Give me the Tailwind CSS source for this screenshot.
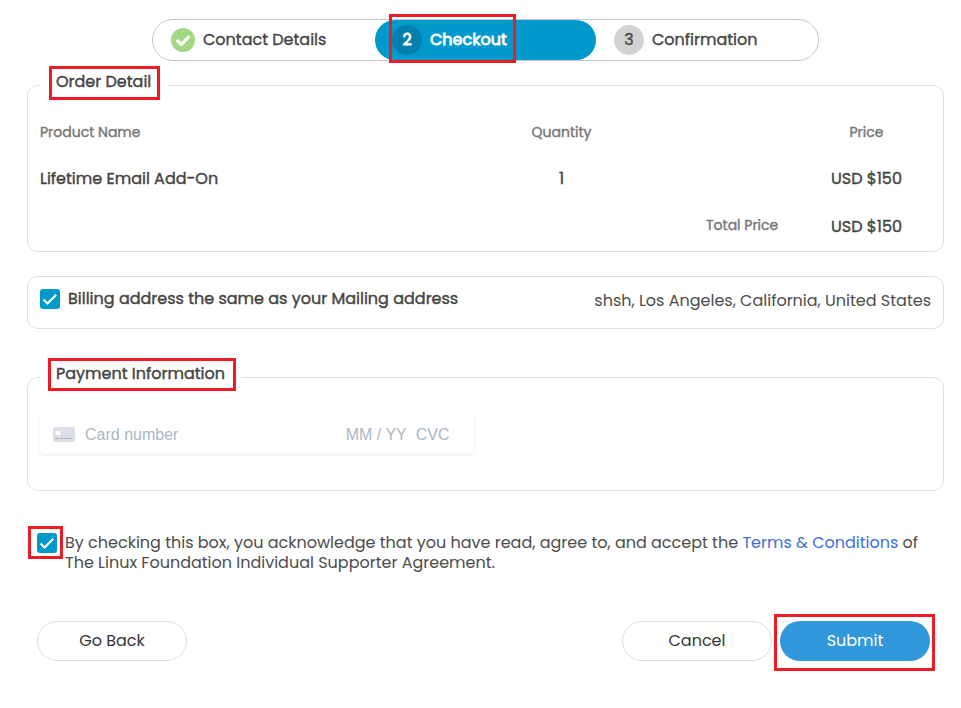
<!DOCTYPE html>
<html lang="en">
<head>
<meta charset="utf-8">
<title>Checkout</title>
<script src="https://cdn.jsdelivr.net/npm/@tailwindcss/browser@4"></script>
</head>
<body class="bg-white w-[961px] h-[708px] overflow-hidden pt-[19px] font-[Poppins,Inter,sans-serif] text-base text-[#444] leading-5">
  <nav class="ml-[152px] w-[667px] h-[42px] border border-[#c8c8c8] rounded-full flex [-webkit-text-stroke:0.35px]">
    <div class="w-[222px] flex items-center pl-[18px] gap-[8px]">
      <svg class="size-6" viewBox="0 0 24 24"><circle cx="12" cy="12" r="12" fill="#a0d884"/><path d="M5.600 11.800l4.600 4.600 8.200-8.200" fill="none" stroke="#fff" stroke-width="3.200"/></svg>
      <span>Contact Details</span>
    </div>
    <div class="relative w-[221px] rounded-full bg-[#0099cc] text-white [-webkit-text-stroke:0.8px] flex items-center pl-[17px] gap-[8px]">
      <span class="size-[30px] rounded-full bg-[#077fab] flex items-center justify-center">2</span>
      <span>Checkout</span>
      <div class="absolute left-[14px] -top-[6px] w-[127px] h-[49px] border-3 border-[#ed1c24]"></div>
    </div>
    <div class="flex items-center pl-[18px] gap-[8px]">
      <span class="size-[30px] rounded-full bg-[#d2d2d2] flex items-center justify-center">3</span>
      <span>Confirmation</span>
    </div>
  </nav>

  <section class="ml-[27px] mt-6 w-[917px] h-[167px] border border-[#dae0e9] rounded-[11px] px-3 [-webkit-text-stroke:0.4px]">
    <h2 class="relative -mt-[15px] h-[30px] w-[127px] bg-white pl-4 flex items-center pb-[9px]">Order Detail
      <div class="absolute left-[9px] -top-[5px] w-[111px] h-[34px] border-3 border-[#ed1c24]"></div>
    </h2>
    <div class="grid grid-cols-[430px_183px_178px_71px] mt-[21px] text-sm leading-5 text-[#777] text-center">
      <div class="text-left">Product Name</div><div>Quantity</div><div></div><div>Price</div>
    </div>
    <div class="grid grid-cols-[430px_183px_178px_71px] mt-[27px] text-center">
      <div class="text-left">Lifetime Email Add-On</div><div>1</div><div></div><div class="whitespace-nowrap">USD $150</div>
    </div>
    <div class="flex justify-between pl-[666px] pr-[29px] mt-[28px]">
      <span class="text-sm leading-5 text-[#777] -mt-[2px]">Total Price</span><span>USD $150</span>
    </div>
  </section>

  <section class="ml-[27px] mt-6 w-[917px] h-[53px] border border-[#dae0e9] rounded-[11px] px-3 pt-3 flex items-start">
    <svg class="size-5" viewBox="0 0 20 20"><rect width="20" height="20" rx="3" fill="#0099cc"/><path d="M3.500 10.500l4 4L16.200 5.700" fill="none" stroke="#fff" stroke-width="2.200"/></svg>
    <span class="ml-2 [-webkit-text-stroke:0.4px]">Billing address the same as your Mailing address</span>
    <span class="ml-auto mt-[2px] text-[#4c4c4c]">shsh, Los Angeles, California, United States</span>
  </section>

  <section class="ml-[27px] mt-12 w-[917px] h-[114px] border border-[#dae0e9] rounded-[11px] px-3">
    <h2 class="relative -mt-[15px] h-[30px] w-[201px] bg-white pl-4 flex items-center pb-[9px] [-webkit-text-stroke:0.4px]">Payment Information
      <div class="absolute left-[8px] -top-[5px] w-[188px] h-[33px] border-3 border-[#ed1c24]"></div>
    </h2>
    <div class="mt-[21px] h-10 w-[434px] rounded shadow-[0_1px_3px_0_#e6ebf1] flex items-center pl-[13px] pt-px font-[Liberation_Sans,Arial,sans-serif] text-[#aab7c4]">
      <svg class="w-[22px] h-[15px]" viewBox="0 0 22 15"><rect width="22" height="15" rx="2" fill="#dcdfe8"/><rect x="2.500" y="4" width="5" height="4" rx="1" fill="#fff"/><path d="M2.500 11.500h17" stroke="#a9adbd" stroke-width="1.200" stroke-dasharray="3.500 1"/></svg>
      <span class="ml-[10px] mt-px">Card number</span><span class="ml-auto mt-px">MM / YY</span><span class="ml-[9px] mr-[24.500px] mt-px">CVC</span>
    </div>
  </section>

  <div class="relative ml-[37px] mt-[42px] flex items-start h-10">
    <svg class="size-5" viewBox="0 0 20 20"><rect width="20" height="20" rx="3" fill="#0099cc"/><path d="M3.500 10.500l4 4L16.200 5.700" fill="none" stroke="#fff" stroke-width="2.200"/></svg>
    <p class="ml-[8px] whitespace-nowrap text-[#4c4c4c]">By checking this box, you acknowledge that you have read, agree to, and accept the <a class="text-[#3b6fd8]">Terms &amp; Conditions</a> of<br>The Linux Foundation Individual Supporter Agreement.</p>
    <div class="absolute -left-[9px] -top-[7px] w-[35px] h-[33px] border-3 border-[#ed1c24]"></div>
  </div>

  <div class="ml-[37px] mt-12 w-[893px] flex gap-2 text-[#363636]">
    <button class="w-[150px] h-10 border border-[#ddd] rounded-full mr-auto">Go Back</button>
    <button class="w-[150px] h-10 border border-[#ddd] rounded-full">Cancel</button>
    <button class="relative w-[150px] h-10 bg-[#3298dc] text-white rounded-full">Submit
      <div class="absolute -left-[6px] -top-[7px] w-[161px] h-[57px] border-3 border-[#ed1c24]"></div>
    </button>
  </div>
</body>
</html>
